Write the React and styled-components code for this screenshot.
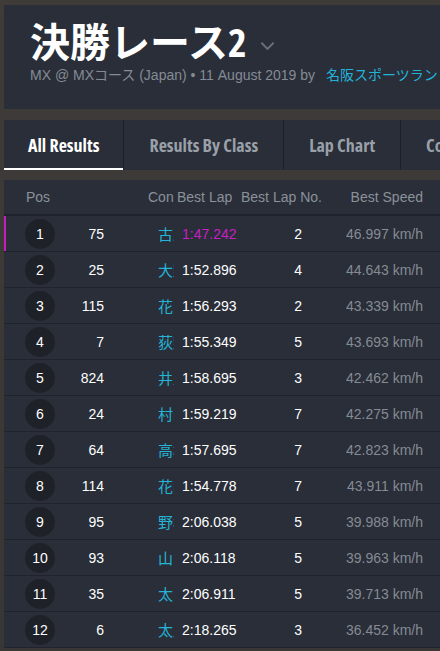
import React from 'react'
import styled, { createGlobalStyle } from 'styled-components'

const GlobalStyle = createGlobalStyle`
  html, body {
    margin: 0;
    padding: 0;
    background: #3b3937;
    overflow: hidden;
  }
  body {
    font-family: "Liberation Sans", Arial, "Noto Sans CJK JP", sans-serif;
  }
`

const rows = [
  { pos: 1, no: 75, name: '古川', lap: '1:47.242', lapNo: 2, speed: '46.997', fastest: true },
  { pos: 2, no: 25, name: '大野', lap: '1:52.896', lapNo: 4, speed: '44.643' },
  { pos: 3, no: 115, name: '花田', lap: '1:56.293', lapNo: 2, speed: '43.339' },
  { pos: 4, no: 7, name: '荻野', lap: '1:55.349', lapNo: 5, speed: '43.693' },
  { pos: 5, no: 824, name: '井上', lap: '1:58.695', lapNo: 3, speed: '42.462' },
  { pos: 6, no: 24, name: '村田', lap: '1:59.219', lapNo: 7, speed: '42.275' },
  { pos: 7, no: 64, name: '高橋', lap: '1:57.695', lapNo: 7, speed: '42.823' },
  { pos: 8, no: 114, name: '花岡', lap: '1:54.778', lapNo: 7, speed: '43.911' },
  { pos: 9, no: 95, name: '野村', lap: '2:06.038', lapNo: 5, speed: '39.988' },
  { pos: 10, no: 93, name: '山田', lap: '2:06.118', lapNo: 5, speed: '39.963' },
  { pos: 11, no: 35, name: '太田', lap: '2:06.911', lapNo: 5, speed: '39.713' },
  { pos: 12, no: 6, name: '太郎', lap: '2:18.265', lapNo: 3, speed: '36.452' },
]

function App() {
  return (
    <Page>
      <GlobalStyle />
      <Header>
        <TitleRow>
          <Title>決勝レース2</Title>
          <Chevron viewBox="0 0 16 10">
            <path d="M1.5 1.5 L8 8 L14.5 1.5" fill="none" stroke="#6a707a" strokeWidth="2" />
          </Chevron>
        </TitleRow>
        <Sub>
          MX @ MXコース (Japan) • 11 August 2019 by <Link>名阪スポーツランド</Link>
        </Sub>
      </Header>

      <Tabs>
        <Tab active>All Results</Tab>
        <Tab>Results By Class</Tab>
        <Tab>Lap Chart</Tab>
        <Tab>Competitors</Tab>
      </Tabs>

      <Table>
        <HeadRow>
          <PosHead>Pos</PosHead>
          <NoCell />
          <ConHead>Con</ConHead>
          <LapHead>Best Lap</LapHead>
          <LapNoHead>Best Lap No.</LapNoHead>
          <SpeedHead>Best Speed</SpeedHead>
        </HeadRow>
        {rows.map(r => (
          <Row key={r.pos} fastest={r.fastest}>
            <PosCell>
              <Circle>{r.pos}</Circle>
            </PosCell>
            <NoCell>{r.no}</NoCell>
            <ConCell>
              <Name>{r.name}</Name>
            </ConCell>
            <LapCell fastest={r.fastest}>{r.lap}</LapCell>
            <LapNoCell>{r.lapNo}</LapNoCell>
            <SpeedCell>{r.speed} km/h</SpeedCell>
          </Row>
        ))}
      </Table>
    </Page>
  )
}

export default App

const Page = styled.div`
  width: 440px;
  height: 651px;
  padding: 5px 0 0 4px;
  box-sizing: border-box;
  background: linear-gradient(180deg, #3e3b39 0%, #393735 100%);
  overflow: hidden;
`

const Header = styled.div`
  width: 460px;
  height: 104px;
  background: #292e38;
  padding: 13px 0 0 26px;
  box-sizing: border-box;
`

const TitleRow = styled.div`
  display: flex;
  align-items: center;
  gap: 13px;
`

const Title = styled.h1`
  margin: 0;
  font-family: "Open Sans", "Noto Sans CJK JP", sans-serif;
  font-stretch: 75%;
  font-weight: 700;
  font-size: 40px;
  line-height: 48px;
  color: #ffffff;
  letter-spacing: 0;
`

const Chevron = styled.svg`
  width: 15px;
  height: 10px;
  margin-top: 8px;
`

const Sub = styled.div`
  margin-top: 1px;
  font-size: 14px;
  line-height: 16px;
  color: #858b95;
  white-space: nowrap;
`

const Link = styled.span`
  color: #24b3d8;
  margin-left: 7px;
`

const Tabs = styled.div`
  margin-top: 11px;
  width: 460px;
  height: 50px;
  background: #292e38;
  display: flex;
`

const Tab = styled.div`
  flex: none;
  display: flex;
  align-items: center;
  padding: 0 ${p => (p.active ? '24px' : '25px')};
  font-family: "Open Sans", sans-serif;
  font-stretch: 75%;
  font-weight: 700;
  font-size: 18px;
  color: ${p => (p.active ? '#ffffff' : '#9aa0a9')};
  border-right: 1px solid #1c2028;
  box-shadow: ${p => (p.active ? 'inset 0 -2px 0 #ffffff' : 'none')};
  white-space: nowrap;
`

const Table = styled.div`
  margin-top: 10px;
  width: 460px;
  background: #292e38;
`

const BaseRow = styled.div`
  display: grid;
  grid-template-columns: 66px 34px 70px 67px 81px 101px 1fr;
  height: 36px;
  align-items: center;
  font-size: 14px;
  border-bottom: 1px solid #1f232b;
  box-sizing: border-box;
`

const HeadRow = styled(BaseRow)`
  color: #8b919a;
  border-bottom: 2px solid #1f232b;
  white-space: nowrap;
`

const Row = styled(BaseRow)`
  color: #ffffff;
  box-shadow: ${p => (p.fastest ? 'inset 2px 0 0 #c41cbf' : 'none')};
`

const PosHead = styled.div`
  padding-left: 22px;
`

const PosCell = styled.div`
  padding-left: 21px;
`

const Circle = styled.div`
  width: 30px;
  height: 30px;
  border-radius: 50%;
  background: #1e2228;
  display: flex;
  align-items: center;
  justify-content: center;
`

const NoCell = styled.div`
  text-align: right;
`

const ConHead = styled.div`
  padding-left: 44px;
`

const ConCell = styled.div`
  display: flex;
  justify-content: flex-end;
`

const Name = styled.span`
  width: 16px;
  overflow: hidden;
  white-space: nowrap;
  color: #25b3d6;
  font-family: "Noto Sans CJK JP", sans-serif;
  font-size: 15px;
`

const LapHead = styled.div`
  padding-left: 3px;
`

const LapCell = styled.div`
  padding-left: 8px;
  color: ${p => (p.fastest ? '#c81fc3' : 'inherit')};
`

const LapNoHead = styled.div``

const LapNoCell = styled.div`
  text-align: right;
  padding-right: 20px;
`

const SpeedHead = styled.div`
  text-align: right;
`

const SpeedCell = styled.div`
  text-align: right;
  color: #858b94;
`
